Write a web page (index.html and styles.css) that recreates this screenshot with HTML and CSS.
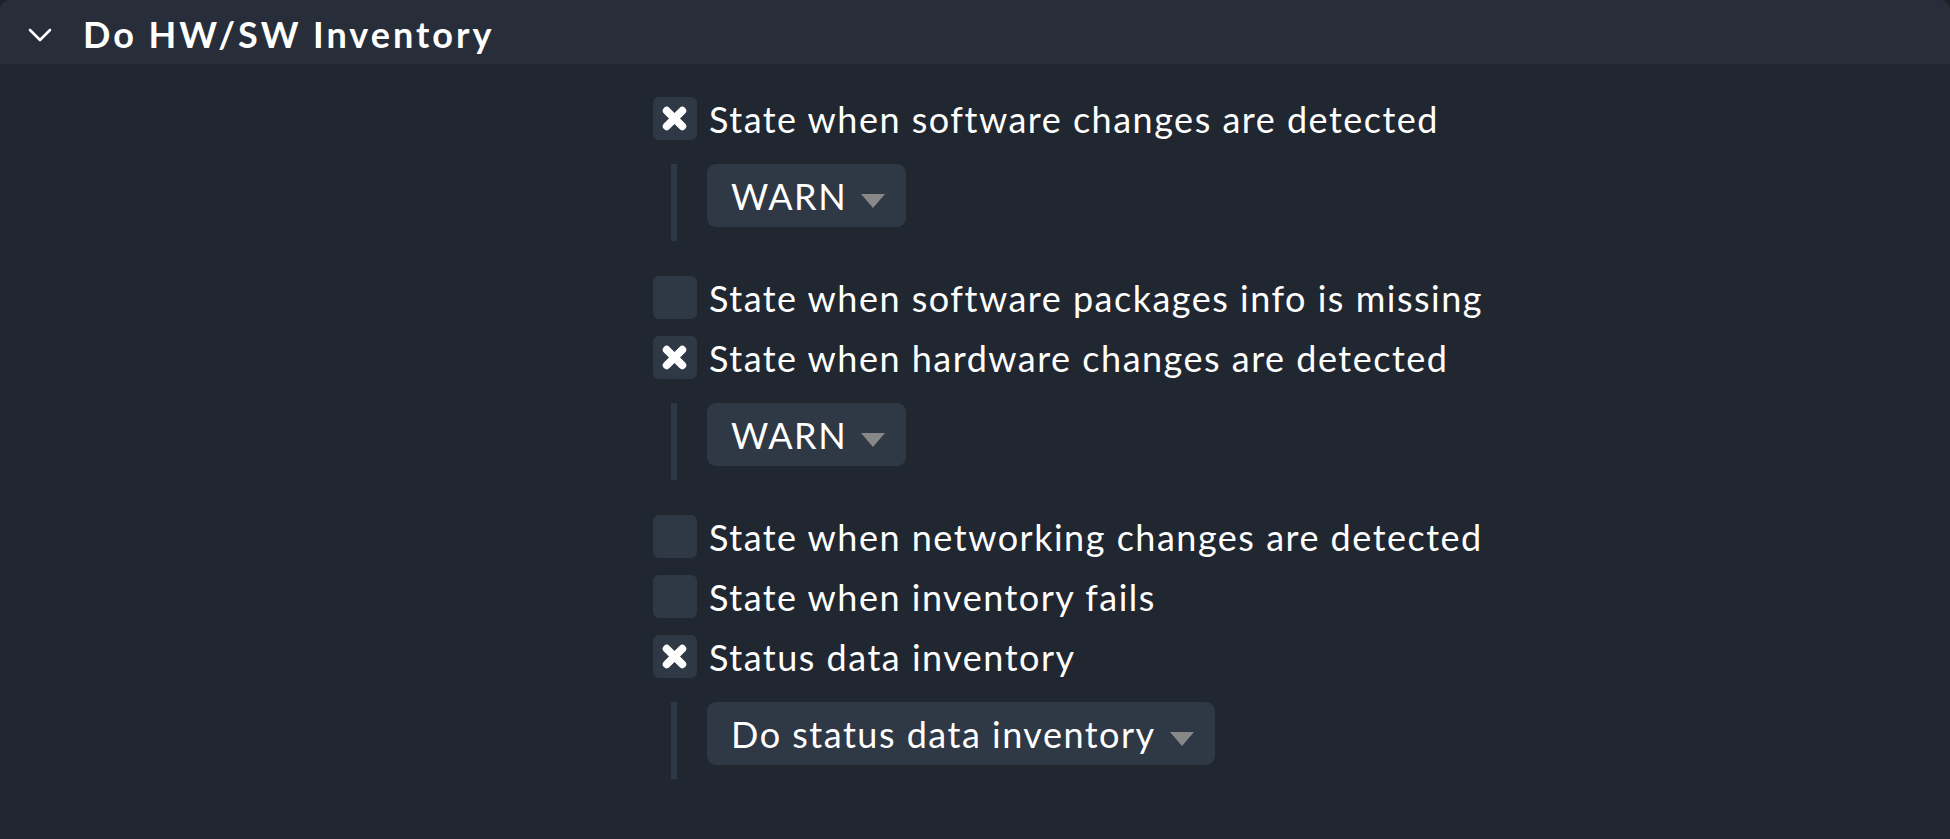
FILE: index.html
```html
<!DOCTYPE html>
<html>
<head>
<meta charset="utf-8">
<link rel="stylesheet" href="styles.css">
</head>
<body>
<div class="panel">
  <div class="panel-head">
    <svg class="chevron" viewBox="0 0 24 14" width="24" height="14"><path d="M2 2 L12 12 L22 2" fill="none" stroke="#fff" stroke-width="2.6" stroke-linecap="round" stroke-linejoin="round"/></svg>
    <span class="panel-title">Do HW/SW Inventory</span>
  </div>
  <div class="panel-body">
    <div class="label-col"></div>
    <div class="value-col">
      <div class="opt">
        <span class="cb checked"><svg viewBox="0 0 24 24" width="25" height="25"><path d="M4.5 4.5 L19.5 19.5 M19.5 4.5 L4.5 19.5" stroke="#fff" stroke-width="7.5" stroke-linecap="round"/></svg></span>
        <span class="opt-label">State when software changes are detected</span>
      </div>
      <div class="nested">
        <div class="select"><span>WARN</span><span class="tri"></span></div>
      </div>
      <div class="opt">
        <span class="cb"></span>
        <span class="opt-label">State when software packages info is missing</span>
      </div>
      <div class="opt">
        <span class="cb checked"><svg viewBox="0 0 24 24" width="25" height="25"><path d="M4.5 4.5 L19.5 19.5 M19.5 4.5 L4.5 19.5" stroke="#fff" stroke-width="7.5" stroke-linecap="round"/></svg></span>
        <span class="opt-label">State when hardware changes are detected</span>
      </div>
      <div class="nested">
        <div class="select"><span>WARN</span><span class="tri"></span></div>
      </div>
      <div class="opt">
        <span class="cb"></span>
        <span class="opt-label">State when networking changes are detected</span>
      </div>
      <div class="opt">
        <span class="cb"></span>
        <span class="opt-label">State when inventory fails</span>
      </div>
      <div class="opt">
        <span class="cb checked"><svg viewBox="0 0 24 24" width="25" height="25"><path d="M4.5 4.5 L19.5 19.5 M19.5 4.5 L4.5 19.5" stroke="#fff" stroke-width="7.5" stroke-linecap="round"/></svg></span>
        <span class="opt-label">Status data inventory</span>
      </div>
      <div class="nested">
        <div class="select"><span>Do status data inventory</span><span class="tri"></span></div>
      </div>
    </div>
  </div>
</div>
</body>
</html>
```

FILE: styles.css
```css
html, body {
  margin: 0;
  padding: 0;
  background: #1d2229;
  height: 100%;
}
body {
  font-family: "Lato", "Liberation Sans", sans-serif;
  color: #fff;
}
.panel {
  background: #212730;
  border-radius: 10px 10px 0 0;
  min-height: 839px;
  overflow: hidden;
}
.panel-head {
  height: 64px;
  background: #272e39;
  display: flex;
  align-items: center;
  padding-left: 28px;
}
.chevron {
  display: block;
  margin-top: 5px;
}
.panel-title {
  font-weight: bold;
  font-size: 36px;
  letter-spacing: 3px;
  margin-left: 31px;
  margin-top: 4px;
}
.panel-body {
  display: grid;
  grid-template-columns: 653px 1fr;
  padding-top: 33px;
}
.value-col {
  display: flex;
  flex-direction: column;
  align-items: flex-start;
}
.opt {
  display: flex;
  align-items: center;
  height: 43px;
  margin-bottom: 17px;
}
.cb {
  width: 44px;
  height: 43px;
  border-radius: 6px;
  background: #2f3845;
  display: flex;
  align-items: center;
  justify-content: center;
  box-sizing: border-box;
}
.cb svg {
  display: block;
  margin-left: -1px;
}
.opt-label {
  font-size: 36px;
  letter-spacing: 1.5px;
  margin-left: 12px;
  white-space: nowrap;
}
.nested {
  margin: 7px 0 35px 18px;
  border-left: 6px solid #2f3845;
  padding: 0 0 14px 30px;
}
.select {
  height: 63px;
  border-radius: 9px;
  background: #2f3845;
  display: flex;
  align-items: center;
  padding: 0 21px 0 24px;
  font-size: 36px;
  letter-spacing: 1.5px;
  white-space: nowrap;
}
.tri {
  width: 0;
  height: 0;
  border-left: 12px solid transparent;
  border-right: 12px solid transparent;
  border-top: 14px solid #888;
  margin-left: 14px;
  margin-top: 10px;
}
```
